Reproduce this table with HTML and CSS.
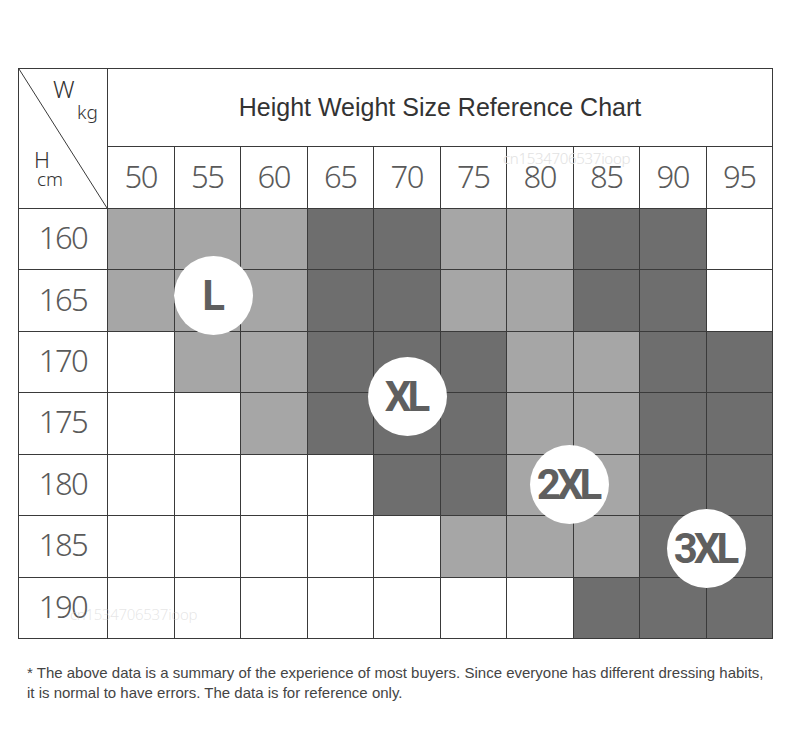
FILE: index.html
```html
<!DOCTYPE html>
<html>
<head>
<meta charset="utf-8">
<link rel="stylesheet" href="styles.css">
</head>
<body>
<div class="page">
  <div class="chart">
    <div class="grid">
      <div class="corner">
        <svg class="diag" viewBox="0 0 100 100" preserveAspectRatio="none"><line x1="0" y1="0" x2="100" y2="100" stroke="#3a3a3a" stroke-width="1" vector-effect="non-scaling-stroke"/></svg>
        <span class="lbl w">W</span>
        <span class="lbl kg">kg</span>
        <span class="lbl h">H</span>
        <span class="lbl cm">cm</span>
      </div>
      <div class="title">Height Weight Size Reference Chart</div>
      <div class="num">50</div><div class="num">55</div><div class="num">60</div><div class="num">65</div><div class="num">70</div><div class="num">75</div><div class="num">80</div><div class="num">85</div><div class="num">90</div><div class="num">95</div>

      <div class="num">160</div>
      <div class="c l"></div><div class="c l"></div><div class="c l"></div><div class="c d"></div><div class="c d"></div><div class="c l"></div><div class="c l"></div><div class="c d"></div><div class="c d"></div><div class="c"></div>

      <div class="num">165</div>
      <div class="c l"></div><div class="c l"></div><div class="c l"></div><div class="c d"></div><div class="c d"></div><div class="c l"></div><div class="c l"></div><div class="c d"></div><div class="c d"></div><div class="c"></div>

      <div class="num">170</div>
      <div class="c"></div><div class="c l"></div><div class="c l"></div><div class="c d"></div><div class="c d"></div><div class="c d"></div><div class="c l"></div><div class="c l"></div><div class="c d"></div><div class="c d"></div>

      <div class="num">175</div>
      <div class="c"></div><div class="c"></div><div class="c l"></div><div class="c d"></div><div class="c d"></div><div class="c d"></div><div class="c l"></div><div class="c l"></div><div class="c d"></div><div class="c d"></div>

      <div class="num">180</div>
      <div class="c"></div><div class="c"></div><div class="c"></div><div class="c"></div><div class="c d"></div><div class="c d"></div><div class="c l"></div><div class="c l"></div><div class="c d"></div><div class="c d"></div>

      <div class="num">185</div>
      <div class="c"></div><div class="c"></div><div class="c"></div><div class="c"></div><div class="c"></div><div class="c l"></div><div class="c l"></div><div class="c l"></div><div class="c d"></div><div class="c d"></div>

      <div class="num">190</div>
      <div class="c"></div><div class="c"></div><div class="c"></div><div class="c"></div><div class="c"></div><div class="c"></div><div class="c"></div><div class="c d"></div><div class="c d"></div><div class="c d"></div>
    </div>

    <span class="mark mark-top">cn1534706537ioop</span>
    <span class="mark mark-bottom">cn1534706537ioop</span>

    <div class="badge badge-l">L</div>
    <div class="badge badge-xl">XL</div>
    <div class="badge badge-2xl">2XL</div>
    <div class="badge badge-3xl">3XL</div>
  </div>

  <p class="note">* The above data is a summary of the experience of most buyers. Since everyone has different dressing habits, it is normal to have errors. The data is for reference only.</p>
</div>
</body>
</html>
```

FILE: styles.css
```css
html, body {
  margin: 0;
  padding: 0;
  background: #ffffff;
}

.page {
  padding: 68px 0 0 18px;
}

.chart {
  position: relative;
  width: 755px;
}

.grid {
  display: grid;
  grid-template-columns: 88px repeat(10, 1fr);
  grid-template-rows: 77px 61px repeat(7, 1fr);
  height: 571px;
  box-sizing: border-box;
  gap: 1px;
  padding: 1px;
  background: #3a3a3a;
}

.grid > div {
  background: #ffffff;
}

.corner {
  grid-row: 1 / span 2;
  position: relative;
  display: flex;
  flex-direction: column;
  font-family: "Noto Sans", sans-serif;
  font-weight: 300;
  color: #333333;
}

.diag {
  position: absolute;
  inset: 0;
  width: 100%;
  height: 100%;
}

.lbl {
  display: block;
  line-height: 1;
  position: relative;
}

.w {
  font-size: 24px;
  margin: 8px 0 0 34px;
}

.kg {
  font-size: 19px;
  margin: 2px 0 0 58px;
}

.h {
  font-size: 22px;
  margin: 26px 0 0 15px;
}

.cm {
  font-size: 19px;
  margin: 0 0 0 18px;
}

.title {
  grid-column: 2 / span 10;
  display: flex;
  align-items: center;
  justify-content: center;
  font-family: "Liberation Sans", Arial, sans-serif;
  font-size: 25px;
  color: #333333;
}

.num {
  display: flex;
  align-items: center;
  justify-content: center;
  padding-bottom: 4px;
  box-sizing: border-box;
  font-family: "Noto Sans", sans-serif;
  font-weight: 300;
  font-size: 31px;
  letter-spacing: -1.5px;
  color: #5a5a5a;
}

.grid > .l {
  background: #a6a6a6;
}

.grid > .d {
  background: #6e6e6e;
}

.mark {
  position: absolute;
  font-family: "Noto Sans", sans-serif;
  font-weight: 300;
  font-size: 15px;
  line-height: 1;
  color: #e2e2e2;
  letter-spacing: -0.3px;
  white-space: nowrap;
}

.mark-top {
  left: 485px;
  top: 83px;
}

.mark-bottom {
  left: 52px;
  top: 539px;
  color: rgba(200, 200, 200, 0.45);
}

.badge {
  position: absolute;
  width: 79px;
  height: 79px;
  border-radius: 50%;
  background: #ffffff;
  display: flex;
  align-items: center;
  justify-content: center;
  font-family: Roboto, "Liberation Sans", sans-serif;
  font-weight: 700;
  font-size: 42px;
  line-height: 1;
  letter-spacing: -4px;
  color: #5f5f5f;
}

.badge-l {
  left: 156px;
  top: 188px;
  letter-spacing: 0;
}

.badge-xl {
  left: 350px;
  top: 289px;
  text-indent: -4px;
}

.badge-2xl {
  left: 512px;
  top: 377px;
  text-indent: -4px;
}

.badge-3xl {
  left: 649px;
  top: 441px;
  text-indent: -4px;
}

.note {
  margin: 24px 0 0 9px;
  width: 745px;
  font-family: "Liberation Sans", Arial, sans-serif;
  font-size: 15px;
  line-height: 20px;
  color: #444444;
}
```
